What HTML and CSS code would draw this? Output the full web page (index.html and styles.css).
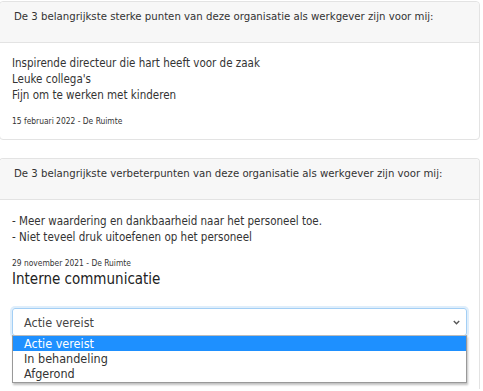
FILE: index.html
```html
<!DOCTYPE html>
<html>
<head>
<meta charset="utf-8">
<link rel="stylesheet" href="styles.css">
</head>
<body>
<div class="page">
  <div class="card">
    <div class="card-header">De 3 belangrijkste sterke punten van deze organisatie als werkgever zijn voor mij:</div>
    <div class="card-body">
      <p class="answer">Inspirende directeur die hart heeft voor de zaak<br>Leuke collega's<br>Fijn om te werken met kinderen</p>
      <p class="meta">15 februari 2022 - De Ruimte</p>
    </div>
  </div>
  <div class="card card-open">
    <div class="card-header">De 3 belangrijkste verbeterpunten van deze organisatie als werkgever zijn voor mij:</div>
    <div class="card-body">
      <p class="answer">- Meer waardering en dankbaarheid naar het personeel toe.<br>- Niet teveel druk uitoefenen op het personeel</p>
      <p class="meta">29 november 2021 - De Ruimte</p>
      <h4 class="topic">Interne communicatie</h4>
      <div class="select-wrap">
        <div class="select">
          <span>Actie vereist</span>
          <svg class="chev" width="7" height="5" viewBox="0 0 7 5"><path d="M0.8 1 L3.5 3.7 L6.2 1" fill="none" stroke="#555" stroke-width="1.4"/></svg>
        </div>
        <ul class="options">
          <li class="active">Actie vereist</li>
          <li>In behandeling</li>
          <li>Afgerond</li>
        </ul>
      </div>
    </div>
  </div>
</div>
</body>
</html>
```
FILE: styles.css
```css
html, body {
  margin: 0;
  padding: 0;
  background: #fff;
}
body {
  font-family: "DejaVu Sans Condensed", "DejaVu Sans", sans-serif;
  color: #333;
  font-size: 11.5px;
  overflow: hidden;
  height: 391px;
}
.page {
  margin: 1px 3px 0 -1px;
}
.card {
  border: 1px solid #e3e3e3;
  border-radius: 4px;
  background: #fff;
  margin-bottom: 18px;
}
.card-open {
  border-bottom: none;
  border-radius: 4px 4px 0 0;
}
.card-header {
  background: #f7f7f7;
  border-bottom: 1px solid #e3e3e3;
  padding: 7px 10px 17px 14px;
  line-height: 16px;
  font-size: 11.3px;
  white-space: nowrap;
  border-radius: 4px 4px 0 0;
}
.card-body {
  padding: 12px 12px 11px 12px;
}
.card-open .card-body {
  padding-top: 13px;
}
.answer {
  margin: 0;
  line-height: 16px;
}
.meta {
  margin: 11px 0 0 0;
  font-size: 8.4px;
  line-height: 14px;
}
.topic {
  margin: 0;
  font-weight: normal;
  font-size: 15px;
  line-height: 19px;
  color: #222;
}
.select-wrap {
  position: relative;
  margin-top: 19px;
  height: 70px;
}
.select {
  height: 26px;
  border: 1px solid #a3cff5;
  border-radius: 3px;
  box-shadow: 0 0 0 2px #dfeefb;
  display: flex;
  align-items: center;
  justify-content: space-between;
  padding: 0 6px 0 11px;
  font-size: 12.5px;
  color: #444;
}
.chev {
  display: block;
}
.options {
  position: absolute;
  left: 0;
  right: 0;
  top: 27px;
  margin: 0;
  padding: 0 0 1px 0;
  list-style: none;
  background: #fff;
  border: 1px solid #999;
  border-top-color: #bbb;
  box-shadow: 1px 2px 2px rgba(0,0,0,.25);
  font-size: 12.5px;
  color: #333;
}
.options li {
  height: 15px;
  line-height: 15px;
  padding-left: 11px;
}
.options li.active {
  background: #1e90ff;
  color: #fff;
}
```
